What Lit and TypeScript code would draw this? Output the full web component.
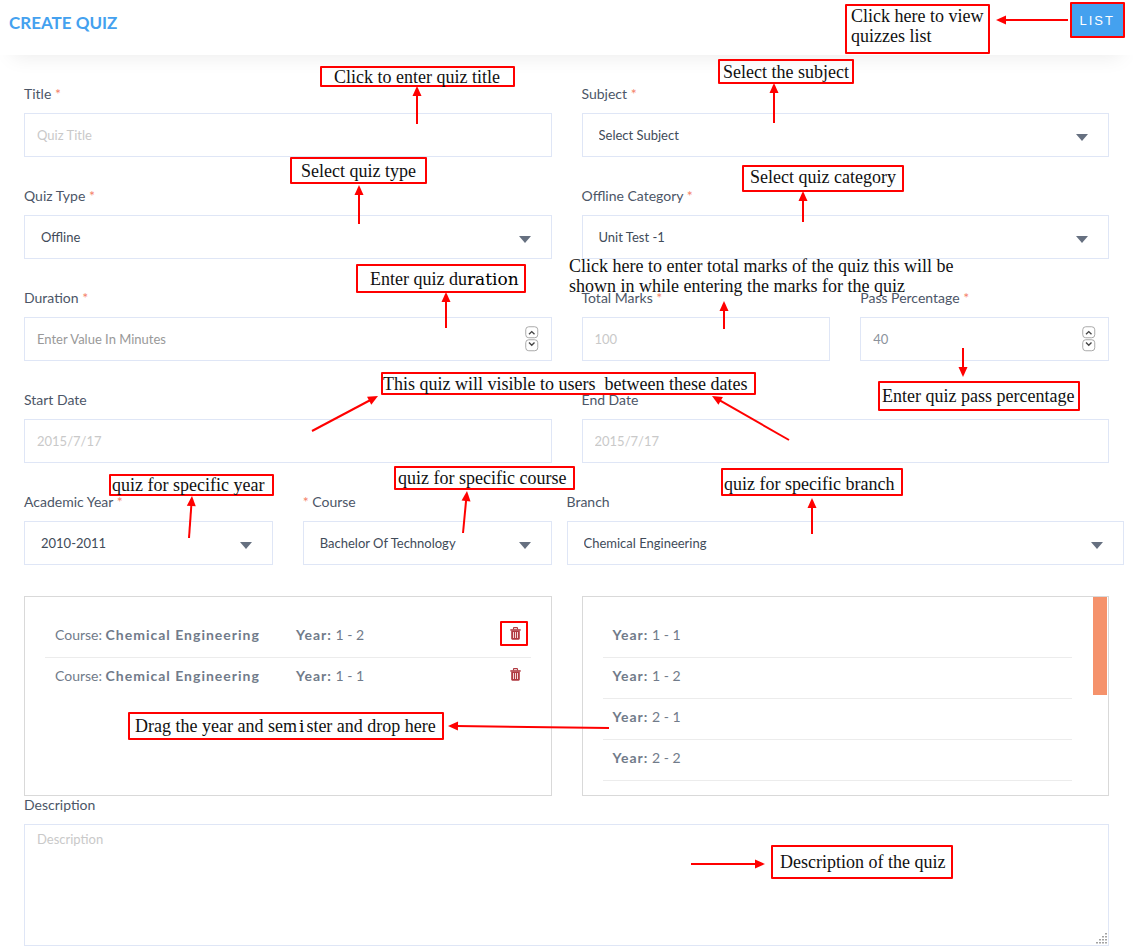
import { LitElement, html, svg, css, nothing } from "lit";
import { customElement, property } from "lit/decorators.js";
import { styleMap } from "lit/directives/style-map.js";

const sharedStyles = css`
  * {
    box-sizing: border-box;
  }
  .field {
    display: flex;
    flex-direction: column;
    gap: 10px;
    min-width: 0;
  }
  .label {
    font-size: 14px;
    line-height: 18px;
    color: #4c5667;
    white-space: pre;
  }
  .required {
    color: #f4826a;
  }
  .shell {
    position: relative;
    display: flex;
  }
  .control {
    width: 100%;
    height: 44px;
    margin: 0;
    padding: 0 12px;
    border: 1px solid #dfe6f6;
    border-radius: 0;
    background: #fff;
    color: #414b59;
    font-family: inherit;
    font-size: 13px;
    line-height: 18px;
    outline: none;
    appearance: none;
    -moz-appearance: textfield;
  }
  .control::-webkit-inner-spin-button {
    appearance: none;
    display: none;
  }
  .control::placeholder {
    color: #c9c9c9;
    opacity: 1;
  }
  .strong::placeholder {
    color: #999;
  }
  .number {
    color: #8b929c;
  }
  .select {
    padding: 0 44px 0 16px;
  }
  .area {
    display: block;
    height: 122px;
    padding: 5px 12px;
    resize: none;
  }
  .caret {
    position: absolute;
    right: 21px;
    top: 21px;
    width: 12px;
    height: 7px;
    fill: #667080;
    pointer-events: none;
  }
  .spinner {
    position: absolute;
    right: 13px;
    top: 9px;
    width: 14px;
    height: 26px;
    pointer-events: none;
  }
  .grip {
    position: absolute;
    right: 2px;
    bottom: 2px;
    width: 11px;
    height: 11px;
    fill: #a3a3a3;
    pointer-events: none;
  }
`;

type Kind = "text" | "number" | "select" | "area";

@customElement("form-field")
export class FormField extends LitElement {
  @property() label = "";
  @property() kind: Kind = "text";
  @property() value = "";
  @property() hint = "";
  @property() mark: "after" | "before" | "none" = "none";
  @property({ type: Boolean }) strong = false;

  static styles = [
    sharedStyles,
    css`
      :host {
        display: block;
        min-width: 0;
      }
    `,
  ];

  private control() {
    switch (this.kind) {
      case "select":
        return html`<select id="control" class="control select">
            <option>${this.value}</option>
          </select>
          <svg class="caret" viewBox="0 0 12 7"><path d="M0 0H12L6 7Z" /></svg>`;
      case "number":
        return html`<input
            id="control"
            class="control number ${this.strong ? "strong" : ""}"
            type="number"
            .value=${this.value}
            placeholder=${this.hint}
          />
          <svg class="spinner" viewBox="0 0 14 26" fill="none">
            <rect x=".75" y=".75" width="12" height="11" rx="3" stroke="#aaa" />
            <rect x=".75" y="13.75" width="12" height="11" rx="3" stroke="#aaa" />
            <path d="M4 8.2L6.75 5.6L9.5 8.2M4 16.6L6.75 19.2L9.5 16.6" stroke="#444" stroke-width="1.4" />
          </svg>`;
      case "area":
        return html`<textarea id="control" class="control area" placeholder=${this.hint}></textarea>
          <svg class="grip" viewBox="0 0 11 11">
            ${[0, 1, 2, 3].map((row) =>
              [0, 1, 2, 3]
                .filter((col) => col >= 3 - row)
                .map((col) => svg`<rect x=${col * 3} y=${row * 3} width="2" height="1.5" />`)
            )}
          </svg>`;
      default:
        return html`<input
          id="control"
          class="control"
          type="text"
          .value=${this.value}
          placeholder=${this.hint}
        />`;
    }
  }

  render() {
    const star = html`<span class="required">*</span>`;
    return html`<div class="field">
      <label class="label" for="control"
        >${this.mark === "before" ? html`${star} ` : nothing}${this.label}${this.mark === "after"
          ? html` ${star}`
          : nothing}</label
      >
      <div class="shell">${this.control()}</div>
    </div>`;
  }
}

interface Note {
  x: number;
  y: number;
  w: number;
  h: number;
  indent?: number;
  text?: unknown;
  bare?: boolean;
  align?: "start" | "end";
}

const patch = (s: string) => html`<span class="patch">${s}</span>`;

const notes: Note[] = [
  { x: 845, y: 4, w: 145, h: 50, indent: 4, text: "Click here to view\nquizzes list", align: "start" },
  { x: 320, y: 66, w: 195, h: 21, indent: 12, text: "Click to enter quiz title" },
  { x: 718, y: 59, w: 136, h: 25, indent: 3, text: "Select the subject" },
  { x: 290, y: 157, w: 137, h: 27, indent: 9, text: "Select quiz type" },
  { x: 742, y: 165, w: 162, h: 27, indent: 6, text: "Select quiz category", align: "start" },
  { x: 356, y: 264, w: 170, h: 29, indent: 12, text: html`Enter quiz du${patch("ration")}` },
  {
    x: 567,
    y: 256,
    w: 400,
    h: 40,
    text: "Click here to enter total marks of the quiz this will be\nshown in while entering the marks for the quiz",
    bare: true,
  },
  { x: 381, y: 372, w: 375, h: 23, text: "This quiz will visible to users  between these dates" },
  { x: 878, y: 381, w: 202, h: 30, indent: 2, text: "Enter quiz pass percentage" },
  { x: 109, y: 474, w: 165, h: 22, indent: 1, text: "quiz for specific year" },
  { x: 394, y: 466, w: 181, h: 24, indent: 2, text: "quiz for specific course" },
  { x: 721, y: 468, w: 182, h: 28, indent: 1, text: "quiz for specific branch", align: "end" },
  {
    x: 128,
    y: 712,
    w: 316,
    h: 28,
    indent: 5,
    text: html`Drag the year and sem<span class="patch apart">i</span>ster and drop here`,
  },
  { x: 771, y: 845, w: 182, h: 34, indent: 7, text: "Description of the quiz" },
  { x: 500, y: 621, w: 28, h: 25 },
];

// Each arrow runs from its tail to its tip: [x1, y1, x2, y2].
const arrows: [number, number, number, number][] = [
  [1068, 20, 996, 20],
  [417, 124, 417, 86],
  [774, 123, 774, 83],
  [359, 224, 359, 185],
  [803, 222, 803, 191],
  [446, 328, 446, 292],
  [724, 329, 724, 301],
  [963, 348, 963, 377],
  [312, 431, 378, 396],
  [789, 440, 712, 396],
  [189, 538, 192, 496],
  [463, 533, 467, 491],
  [812, 534, 812, 498],
  [609, 728, 448, 726],
  [691, 864, 765, 864],
];

@customElement("note-layer")
export class NoteLayer extends LitElement {
  static styles = css`
    :host {
      position: absolute;
      inset: 0;
      pointer-events: none;
      overflow: hidden;
    }
    .arrows {
      position: absolute;
      inset: 0;
      width: 100%;
      height: 100%;
    }
    .line {
      stroke: #f00;
      stroke-width: 2;
    }
    .head {
      fill: #f00;
    }
    .note {
      position: absolute;
      box-sizing: border-box;
      display: flex;
      align-items: center;
      border: 2px solid #f00;
      border-radius: 1px;
      font-family: "Liberation Serif", serif;
      font-size: 18px;
      line-height: 20px;
      color: #111;
      white-space: pre;
    }
    .start {
      align-items: flex-start;
    }
    .end {
      align-items: flex-end;
    }
    .bare {
      border-color: transparent;
    }
    .patch {
      font-family: "DejaVu Serif", serif;
      font-size: 17px;
      color: #000;
    }
    .apart {
      margin: 0 2px;
    }
  `;

  render() {
    return html`<svg class="arrows">
        ${arrows.map(([x1, y1, x2, y2]) => {
          const length = Math.hypot(x2 - x1, y2 - y1);
          const angle = (Math.atan2(y2 - y1, x2 - x1) * 180) / Math.PI;
          return svg`<g transform="translate(${x1} ${y1}) rotate(${angle})">
            <line class="line" x1="0" y1="0" x2=${length - 8} y2="0" />
            <path class="head" d="M${length} 0l-10 -4.5v9z" />
          </g>`;
        })}
      </svg>
      ${notes.map(
        (n) => html`<div
          class="note ${n.bare ? "bare" : ""} ${n.align ?? ""}"
          style=${styleMap({
            left: `${n.x}px`,
            top: `${n.y}px`,
            width: `${n.w}px`,
            height: `${n.h}px`,
            paddingLeft: `${n.indent ?? 0}px`,
          })}
        >
          ${n.text ? html`<span>${n.text}</span>` : nothing}
        </div>`
      )}`;
  }
}

@customElement("app-root")
export class AppRoot extends LitElement {
  static styles = [
    sharedStyles,
    css`
      :host {
        display: block;
        position: relative;
        min-height: 100vh;
        box-sizing: border-box;
        padding-bottom: 6px;
        background: #fff;
        font-family: Lato, "Open Sans", sans-serif;
      }
      .header {
        display: flex;
        justify-content: space-between;
        align-items: flex-start;
        height: 55px;
        padding: 2px 8px 0 9px;
        box-shadow: 0 14px 20px -12px rgba(0, 0, 0, 0.08);
      }
      .title {
        margin: 0;
        padding-top: 11px;
        font-size: 17px;
        line-height: 20px;
        font-weight: 700;
        color: #44a1ef;
      }
      .list {
        height: 36px;
        padding: 0 8px;
        border: 2px solid #f00;
        border-radius: 1px;
        background: #44a1ef;
        color: #fff;
        font-family: "Liberation Sans", sans-serif;
        font-size: 13px;
        letter-spacing: 2px;
      }
      .form {
        display: flex;
        flex-direction: column;
        gap: 30px;
        padding: 30px 24px 0;
      }
      .row {
        display: grid;
        grid-template-columns: minmax(0, 1fr) minmax(0, 1fr);
        gap: 30px;
      }
      .wide {
        margin: 0 -15px;
      }
      .stack {
        display: flex;
        flex-direction: column;
        padding-top: 1px;
      }
      .panel {
        display: flex;
        height: 200px;
        padding: 20px;
        border: 1px solid #d9d9d9;
        overflow: hidden;
      }
      .years {
        padding: 0 1px 0 20px;
      }
      .items {
        flex: 1;
        margin: 0;
        padding: 0;
        list-style: none;
      }
      .item {
        display: flex;
        align-items: center;
        height: 41px;
        padding: 0 10px 4px;
        border-bottom: 1px solid #ececec;
        font-size: 14px;
        line-height: 18px;
        color: #717b8a;
      }
      .years .items {
        padding-top: 20px;
        margin-right: 21px;
      }
      .picked .item:last-child {
        border-bottom-color: transparent;
      }
      .course {
        flex: 0 0 241px;
      }
      .year {
        flex: 1;
      }
      .name {
        font-weight: 700;
        letter-spacing: 1px;
      }
      .remove {
        display: flex;
        width: 11px;
        height: 17px;
        padding: 0;
        border: 0;
        background: none;
      }
      .trash {
        width: 11px;
        height: 13px;
      }
      .thumb {
        flex: 0 0 14px;
        height: 98px;
        background: #f5926b;
      }
    `,
  ];

  private picked = ["1 - 2", "1 - 1"];
  private years = ["1 - 1", "1 - 2", "2 - 1", "2 - 2"];

  render() {
    return html`
      <header class="header">
        <h1 class="title">CREATE QUIZ</h1>
        <button class="list" type="button">LIST</button>
      </header>
      <form class="form">
        <div class="row">
          <form-field label="Title" mark="after" hint="Quiz Title"></form-field>
          <form-field label="Subject" mark="after" kind="select" value="Select Subject"></form-field>
        </div>
        <div class="row">
          <form-field label="Quiz Type" mark="after" kind="select" value="Offline"></form-field>
          <form-field label="Offline Category" mark="after" kind="select" value="Unit Test -1"></form-field>
        </div>
        <div class="row">
          <form-field label="Duration" mark="after" kind="number" hint="Enter Value In Minutes" strong></form-field>
          <div class="row">
            <form-field label="Total Marks" mark="after" hint="100"></form-field>
            <form-field label="Pass Percentage" mark="after" kind="number" value="40"></form-field>
          </div>
        </div>
        <div class="row">
          <form-field label="Start Date" hint="2015/7/17"></form-field>
          <form-field label="End Date" hint="2015/7/17"></form-field>
        </div>
        <div class="row">
          <div class="row">
            <form-field label="Academic Year" mark="after" kind="select" value="2010-2011"></form-field>
            <form-field label="Course" mark="before" kind="select" value="Bachelor Of Technology"></form-field>
          </div>
          <form-field class="wide" label="Branch" kind="select" value="Chemical Engineering"></form-field>
        </div>
        <div class="stack">
          <div class="row">
            <div class="panel picked">
              <ul class="items">
                ${this.picked.map(
                  (y) => html`<li class="item">
                    <span class="course">Course: <b class="name">Chemical Engineering</b></span>
                    <span class="year"><b class="name">Year:</b> ${y}</span>
                    <button class="remove" type="button" aria-label="Remove">
                      <svg class="trash" viewBox="0 0 11 13">
                        <path
                          d="M3.5 2.5V1.2Q3.5.6 4.1.6H6.9Q7.5.6 7.5 1.2V2.5"
                          fill="none"
                          stroke="#b03a41"
                          stroke-width="1.1"
                        />
                        <path d="M.3 2.2H10.7V3.7H.3Z" fill="#b03a41" />
                        <path d="M1.2 3.5H9.8V11.6Q9.8 12.7 8.7 12.7H2.3Q1.2 12.7 1.2 11.6Z" fill="#b03a41" />
                        <path d="M3.5 5V11M5.5 5V11M7.5 5V11" stroke="#fbe9e9" stroke-width=".9" />
                      </svg>
                    </button>
                  </li>`
                )}
              </ul>
            </div>
            <div class="panel years">
              <ul class="items">
                ${this.years.map((y) => html`<li class="item"><span><b class="name">Year:</b> ${y}</span></li>`)}
              </ul>
              <div class="thumb"></div>
            </div>
          </div>
          <form-field label="Description" kind="area" hint="Description"></form-field>
        </div>
      </form>
      <note-layer></note-layer>
    `;
  }
}
